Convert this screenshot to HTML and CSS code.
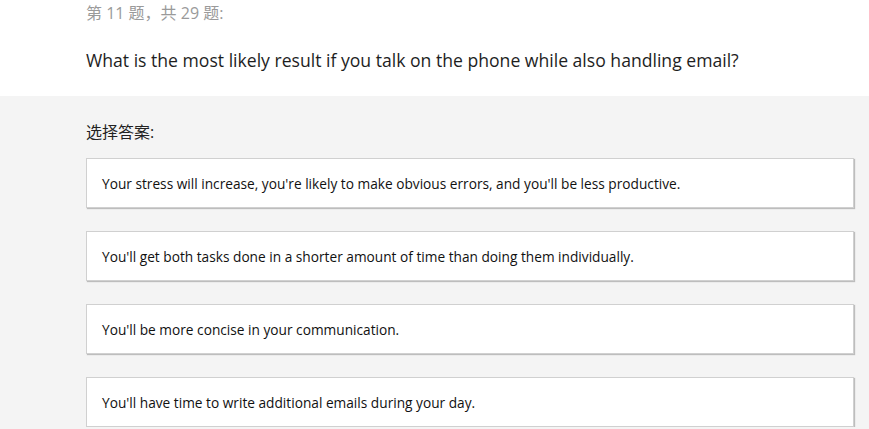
FILE: index.html
```html
<!DOCTYPE html>
<html lang="zh">
<head>
<meta charset="utf-8">
<title>Quiz</title>
<link rel="stylesheet" href="styles.css">
</head>
<body>
<div class="top">
  <div class="counter">第 11 题，共 29 题:</div>
  <div class="question">What is the most likely result if you talk on the phone while also handling email?</div>
</div>
<div class="answers">
  <div class="label">选择答案:</div>
  <div class="list">
    <div class="card">Your stress will increase, you're likely to make obvious errors, and you'll be less productive.</div>
    <div class="card">You'll get both tasks done in a shorter amount of time than doing them individually.</div>
    <div class="card">You'll be more concise in your communication.</div>
    <div class="card">You'll have time to write additional emails during your day.</div>
  </div>
</div>
</body>
</html>
```
FILE: styles.css
```css
html, body {
  margin: 0;
  padding: 0;
  background: #f4f4f4;
  font-family: "Open Sans", "Noto Sans CJK SC", sans-serif;
  color: #222;
}
.top {
  background: #fff;
  padding: 2px 0 0 86px;
  height: 94px;
}
.counter {
  font-size: 16px;
  color: #9a9a9a;
  line-height: 22px;
}
.question {
  font-size: 17.6px;
  line-height: 24px;
  margin-top: 24px;
  color: #1e1e1e;
}
.answers {
  padding: 24px 16px 0 86px;
}
.label {
  font-size: 16px;
  line-height: 24px;
  color: #222;
}
.list {
  margin-top: 14px;
  display: flex;
  flex-direction: column;
  gap: 23px;
  width: 768px;
}
.card {
  box-sizing: border-box;
  height: 50px;
  background: #fff;
  border: 1px solid #d0d0d0;
  box-shadow: 1px 1px 1px #bdbdbd;
  padding: 0 15px;
  display: flex;
  align-items: center;
  font-size: 13.7px;
  color: #111;
}
```
